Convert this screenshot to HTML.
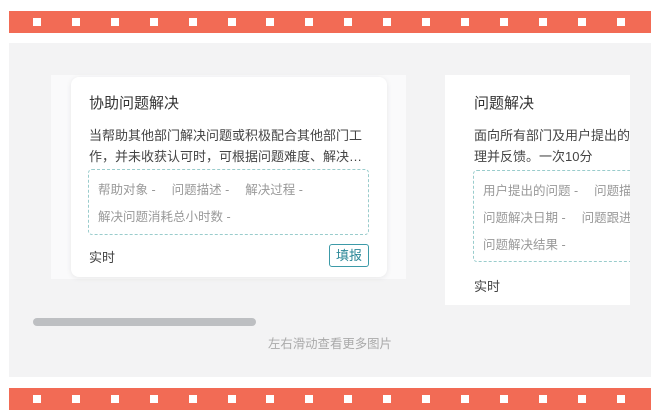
<!DOCTYPE html>
<html><head><meta charset="utf-8"><style>
*{margin:0;padding:0;box-sizing:border-box}
body{width:660px;height:419px;background:#fff;position:relative;overflow:hidden;font-family:"Liberation Sans","Noto Sans CJK SC",sans-serif}
.strip{position:absolute;left:9px;width:642px;height:22px;background:#f26b55}
.sq{position:absolute;top:7px;width:8px;height:8px;background:#fff}
.panel{position:absolute;left:9px;top:43px;width:642px;height:334px;background:#f3f3f4}
.abs{position:absolute}
.card{position:absolute;left:71px;top:77px;width:316px;height:200px;background:#fff;border-radius:8px;box-shadow:0 1px 6px rgba(0,0,0,.08)}
.t{color:#333;font-size:15px}
.d{color:#444;font-size:13px;line-height:21px}
.box{position:absolute;border:1px dashed #9cc;border-radius:4px;color:#999;font-size:12.5px;line-height:27px;padding:7px 9px 0}
.box span{display:inline-block;margin-right:16px}
</style></head><body>
<div class="strip" style="top:11px" id="s1"></div>
<div class="strip" style="top:388px" id="s2"></div>
<div class="panel"></div>
<div class="abs" style="left:51px;top:75px;width:355px;height:204px;background:#fafafb"></div>
<div class="card">
 <div class="abs t" style="left:18px;top:15px">协助问题解决</div>
 <div class="abs d" style="left:18px;top:48px;width:290px">当帮助其他部门解决问题或积极配合其他部门工作，并未收获认可时，可根据问题难度、解决…</div>
 <div class="box" style="left:17px;top:92px;width:281px;height:66px"><span>帮助对象 -</span><span>问题描述 -</span><span>解决过程 -</span><br><span>解决问题消耗总小时数 -</span></div>
 <div class="abs" style="left:18px;top:170px;font-size:13px;color:#444">实时</div>
 <div class="abs" style="left:258px;top:167px;width:40px;height:23px;border:1px solid #3c9aa8;border-radius:3px;color:#2a8797;font-size:13px;text-align:center;line-height:21px">填报</div>
</div>
<div class="abs" style="left:445px;top:75px;width:185px;height:230px;background:#fff;overflow:hidden">
 <div class="abs t" style="left:29px;top:17px;white-space:nowrap">问题解决</div>
 <div class="abs d" style="left:29px;top:50px;white-space:nowrap">面向所有部门及用户提出的问<br>理并反馈。一次10分</div>
 <div class="box" style="left:28px;top:95px;width:200px;height:92px;white-space:nowrap"><span>用户提出的问题 -</span><span>问题描述</span><br><span>问题解决日期 -</span><span>问题跟进</span><br><span>问题解决结果 -</span></div>
 <div class="abs" style="left:29px;top:201px;font-size:13px;color:#444">实时</div>
</div>
<div class="abs" style="left:33px;top:318px;width:223px;height:8px;border-radius:4px;background:#bdbfc2"></div>
<div class="abs" style="left:268px;top:334px;font-size:12.4px;color:#aaa">左右滑动查看更多图片</div>
<script>
['s1','s2'].forEach(function(id){var s=document.getElementById(id);for(var i=0;i<17;i++){var d=document.createElement('div');d.className='sq';d.style.left=(24+i*38.9)+'px';s.appendChild(d);}});
</script>
</body></html>
